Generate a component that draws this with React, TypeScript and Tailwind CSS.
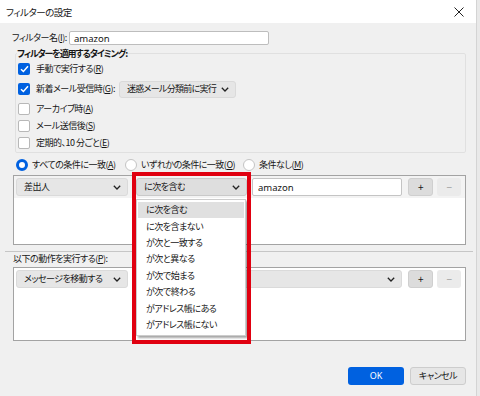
import React from "react";

const U = ({ c }: { c: string }) => (
  <span className="underline underline-offset-[1px] decoration-[0.8px]">{c}</span>
);

const Chevron = ({ color = "#222" }: { color?: string }) => (
  <svg width="8" height="5" viewBox="0 0 8 5" className="shrink-0">
    <path d="M0.8 0.8L4 4L7.2 0.8" fill="none" stroke={color} strokeWidth="1.3" />
  </svg>
);

const CheckBox = ({ checked }: { checked?: boolean }) =>
  checked ? (
    <div className="w-[12px] h-[12px] rounded-[2px] bg-[#0061e0] flex items-center justify-center shrink-0">
      <svg width="9" height="8" viewBox="0 0 9 8">
        <path d="M1 4.2L3.4 6.5L8 1.3" fill="none" stroke="#fff" strokeWidth="1.5" />
      </svg>
    </div>
  ) : (
    <div className="w-[12px] h-[12px] rounded-[2px] bg-white border border-[#b8b8b8] shrink-0" />
  );

const Radio = ({ checked }: { checked?: boolean }) =>
  checked ? (
    <div className="w-[12px] h-[12px] rounded-full border-[3.5px] border-[#0061e0] bg-white shrink-0" />
  ) : (
    <div className="w-[12px] h-[12px] rounded-full border border-[#c4c4c4] bg-white shrink-0" />
  );

const Select = ({
  label,
  w,
  dark,
}: {
  label: string;
  w: string;
  dark?: boolean;
}) => (
  <div
    className={`${w} h-[18px] rounded-[3px] border flex items-center justify-between pl-[7px] pr-[6px] shrink-0 ${
      dark ? "bg-[#dedede] border-[#c9c9c9]" : "bg-[#e6e6e6] border-[#dadada]"
    }`}
  >
    <span className="leading-[12px] whitespace-nowrap overflow-hidden">{label}</span>
    <Chevron />
  </div>
);

const PlusMinus = () => (
  <>
    <div className="w-[25px] h-[18px] ml-[6px] rounded-[3px] bg-[#dcdcdc] border border-[#cfcfcf] flex items-center justify-center shrink-0">
      <span className="text-[10px] leading-[10px]">+</span>
    </div>
    <div className="w-[24px] h-[18px] ml-[4px] rounded-[3px] bg-[#ebebeb] flex items-center justify-center shrink-0">
      <span className="text-[10px] leading-[10px] text-[#9a9a9a]">−</span>
    </div>
  </>
);

const items = [
  "に次を含む",
  "に次を含まない",
  "が次と一致する",
  "が次と異なる",
  "が次で始まる",
  "が次で終わる",
  "がアドレス帳にある",
  "がアドレス帳にない",
];

export default function App() {
  return (
    <div className="w-[480px] h-[396px] flex bg-[#f0f0f0] overflow-hidden relative text-[9px] tracking-[-0.5px] text-[#161616] [font-family:'Noto_Sans_CJK_JP','Noto_Sans',sans-serif] [font-feature-settings:'palt']">
      <div className="w-[476px] flex flex-col shrink-0">
        {/* Title bar */}
        <div className="h-[23px] bg-white flex items-center justify-between pl-[6px] pr-[12px] shrink-0">
          <span className="text-[9.5px] leading-[12px]">フィルターの設定</span>
          <svg width="10" height="10" viewBox="0 0 10 10">
            <path d="M0.5 0.5L9.5 9.5M9.5 0.5L0.5 9.5" stroke="#222" strokeWidth="1" />
          </svg>
        </div>

        {/* Filter name */}
        <div className="mt-[8px] h-[14px] flex items-center pl-[12px]">
          <span className="w-[57px] leading-[12px] whitespace-nowrap">
            フィルター名(<U c="I" />):
          </span>
          <div className="w-[200px] h-[14px] bg-white border border-[#bdbdbd] rounded-[2px] flex items-center pl-[4px]">
            <span className="leading-[11px] tracking-normal [font-family:'Noto_Sans',sans-serif] text-[9.5px]">amazon</span>
          </div>
        </div>

        {/* Timing fieldset */}
        <fieldset className="mt-[2px] ml-[15px] w-[451px] border border-[#e0e0e0] rounded-[2px] pl-[1px] pb-[1px]">
          <legend className="font-bold leading-[13px] px-0 tracking-[-1.1px]">フィルターを適用するタイミング:</legend>
          <div className="flex flex-col pl-[1px]">
            <div className="h-[17px] flex items-center">
              <CheckBox checked />
              <span className="ml-[6px] leading-[12px]">
                手動で実行する(<U c="R" />)
              </span>
            </div>
            <div className="mt-[3px] h-[18px] flex items-center">
              <CheckBox checked />
              <span className="ml-[6px] w-[83px] leading-[12px] whitespace-nowrap">
                新着メール受信時(<U c="G" />):
              </span>
              <div className="w-[117px] h-[17px] rounded-[3px] bg-[#e6e6e6] border border-[#dadada] flex items-center justify-between pl-[7px] pr-[6px]">
                <span className="leading-[12px] whitespace-nowrap tracking-[-0.7px]">迷惑メール分類前に実行</span>
                <Chevron />
              </div>
            </div>
            <div className="mt-[2px] h-[17px] flex items-center">
              <CheckBox />
              <span className="ml-[6px] leading-[12px]">
                アーカイブ時(<U c="A" />)
              </span>
            </div>
            <div className="h-[17px] flex items-center">
              <CheckBox />
              <span className="ml-[6px] leading-[12px]">
                メール送信後(<U c="S" />)
              </span>
            </div>
            <div className="h-[17px] flex items-center">
              <CheckBox />
              <span className="ml-[6px] leading-[12px]">
                定期的、10 分ごと(<U c="E" />)
              </span>
            </div>
          </div>
        </fieldset>

        {/* Radio row */}
        <div className="mt-[4px] h-[16px] flex items-center pl-[16px]">
          <div className="w-[109px] flex items-center">
            <Radio checked />
            <span className="ml-[4px] leading-[12px] whitespace-nowrap">
              すべての条件に一致(<U c="A" />)
            </span>
          </div>
          <div className="w-[118px] flex items-center">
            <Radio />
            <span className="ml-[4px] leading-[12px] whitespace-nowrap">
              いずれかの条件に一致(<U c="O" />)
            </span>
          </div>
          <div className="flex items-center">
            <Radio />
            <span className="ml-[4px] leading-[12px] whitespace-nowrap">
              条件なし(<U c="M" />)
            </span>
          </div>
        </div>

        {/* Criteria box */}
        <div className="mt-[2px] ml-[13px] w-[453px] h-[70px] border border-[#a3a3a3] bg-white shrink-0">
          <div className="bg-[#f3f3f3] pt-[2px] pb-[2px] pl-[2px] flex items-center">
            <Select label="差出人" w="w-[112px]" />
            <div className="ml-[8px]">
              <Select label="に次を含む" w="w-[111px]" dark />
            </div>
            <div className="ml-[5px] w-[150px] h-[18px] bg-white border border-[#c4c4c4] rounded-[2px] flex items-center pl-[5px] shrink-0">
              <span className="leading-[11px] tracking-normal [font-family:'Noto_Sans',sans-serif] text-[9.5px]">amazon</span>
            </div>
            <PlusMinus />
          </div>
        </div>

        {/* Separator */}
        <div className="mt-[6px] ml-[5px] w-[468px] h-px bg-[#c6c6c6] shrink-0" />

        {/* Actions label */}
        <div className="h-[14px] flex items-center pl-[13px] shrink-0">
          <span className="leading-[12px]">
            以下の動作を実行する(<U c="P" />):
          </span>
        </div>

        {/* Action box */}
        <div className="mt-[1px] ml-[13px] w-[453px] h-[74px] border border-[#a3a3a3] bg-white shrink-0">
          <div className="pt-[2px] pl-[2px] flex items-center">
            <Select label="メッセージを移動する" w="w-[112px]" />
            <div className="ml-[8px]">
              <Select label="" w="w-[266px]" />
            </div>
            <PlusMinus />
          </div>
        </div>

        {/* Buttons */}
        <div className="mt-[26px] h-[18px] flex justify-end pr-[10px] shrink-0">
          <div className="w-[56px] h-[18px] rounded-[3px] bg-[#0061e0] flex items-center justify-center">
            <span className="text-white leading-[12px] tracking-normal [font-family:'Noto_Sans',sans-serif]">OK</span>
          </div>
          <div className="ml-[6px] w-[56px] h-[18px] rounded-[3px] bg-[#e6e6e6] border border-[#cdcdcd] flex items-center justify-center">
            <span className="leading-[12px]">キャンセル</span>
          </div>
        </div>
      </div>

      {/* window edge */}
      <div className="w-[4px] border-l border-[#d4d4d4] bg-[#e9e9e9] shrink-0" />

      {/* Open dropdown popup */}
      <div className="absolute left-[136px] top-[199px] w-[110px] bg-white border border-[#cccccc] shadow-[2px_2px_2px_rgba(0,0,0,0.35)] py-[2px] flex flex-col">
        {items.map((t, i) => (
          <div
            key={t}
            className={`h-[16.4px] flex items-center pl-[8px] mx-[1px] ${i === 0 ? "bg-[#e0e0e0]" : ""}`}
          >
            <span className="leading-[12px] whitespace-nowrap">{t}</span>
          </div>
        ))}
      </div>

      {/* Red annotation rectangle */}
      <div className="absolute left-[132px] top-[172px] w-[119px] h-[172px] border-[4px] border-[#e00010] pointer-events-none" />
    </div>
  );
}
